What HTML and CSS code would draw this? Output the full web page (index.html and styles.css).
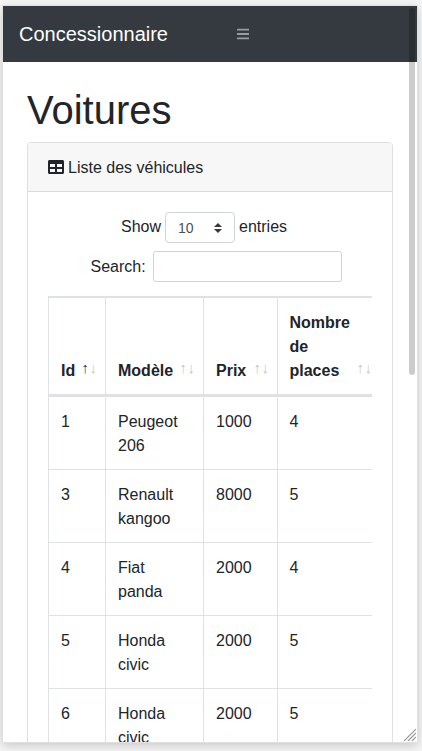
FILE: index.html
```html
<!DOCTYPE html>
<html lang="fr">
<head>
<meta charset="utf-8">
<title>Concessionnaire</title>
<link rel="stylesheet" href="styles.css">
</head>
<body>
<div class="viewport">
  <nav class="navbar">
    <span class="brand">Concessionnaire</span>
    <svg class="bars" viewBox="0 0 448 512" width="12.25" height="14" fill="currentColor"><path d="M16 132h416c8.837 0 16-7.163 16-16V76c0-8.837-7.163-16-16-16H16C7.163 60 0 67.163 0 76v40c0 8.837 7.163 16 16 16zm0 160h416c8.837 0 16-7.163 16-16v-40c0-8.837-7.163-16-16-16H16c-8.837 0-16 7.163-16 16v40c0 8.837 7.163 16 16 16zm0 160h416c8.837 0 16-7.163 16-16v-40c0-8.837-7.163-16-16-16H16c-8.837 0-16 7.163-16 16v40c0 8.837 7.163 16 16 16z"/></svg>
  </nav>
  <main class="content">
    <h1>Voitures</h1>
    <section class="card">
      <header class="card-header">
        <svg viewBox="0 0 512 512" width="16" height="16" fill="currentColor"><path d="M464 32H48C21.490 32 0 53.490 0 80v352c0 26.510 21.490 48 48 48h416c26.510 0 48-21.490 48-48V80c0-26.510-21.490-48-48-48zM224 416H64v-96h160v96zm0-160H64v-96h160v96zm224 160H288v-96h160v96zm0-160H288v-96h160v96z"/></svg>
        <span>Liste des véhicules</span>
      </header>
      <div class="card-body">
        <div class="length"><span>Show</span>
          <div class="select"><span>10</span><svg viewBox="0 0 4 5" width="8" height="10"><path fill="#343a40" d="M2 0L0 2h4zm0 5L0 3h4z"/></svg></div>
          <span>entries</span></div>
        <label class="search"><span>Search:</span><input type="text"></label>
        <div class="table-wrap">
          <table>
            <colgroup><col class="c-id"><col class="c-model"><col class="c-price"><col class="c-seats"></colgroup>
            <thead><tr>
              <th class="asc">Id</th><th>Modèle</th><th>Prix</th><th>Nombre de places</th>
            </tr></thead>
            <tbody>
              <tr><td>1</td><td>Peugeot 206</td><td>1000</td><td>4</td></tr>
              <tr><td>3</td><td>Renault kangoo</td><td>8000</td><td>5</td></tr>
              <tr><td>4</td><td>Fiat panda</td><td>2000</td><td>4</td></tr>
              <tr><td>5</td><td>Honda civic</td><td>2000</td><td>5</td></tr>
              <tr><td>6</td><td>Honda civic</td><td>2000</td><td>5</td></tr>
            </tbody>
          </table>
        </div>
      </div>
    </section>
  </main>
  <div class="scrollbar"></div>
  <svg class="grip" viewBox="0 0 12 12" width="12" height="12" stroke="#999" stroke-width="1.2" fill="none"><path d="M0 12L12 0M4 12L12 4M8 12L12 8"/></svg>
</div>
</body>
</html>
```
FILE: styles.css
```css
* { box-sizing: border-box; }
html { background: #f4f4f4; }
body {
  margin: 0;
  height: 751px;
  padding: 6px 5px 9px 3px;
  overflow: hidden;
  font: 16px/24px "Liberation Sans", Arial, sans-serif;
  color: #212529;
}
.viewport {
  position: relative;
  height: 736px;
  background: #fff;
  box-shadow: 0 0 0 1px #dfe1e1, 0 3px 10px rgba(0, 0, 0, .2);
  display: flow-root;
}
.navbar {
  display: flex;
  align-items: center;
  height: 56px;
  padding-left: 16px;
  background: #343a40;
}
.brand {
  width: 218px;
  font-size: 20px;
  line-height: 30px;
  color: #fff;
}
.bars { color: rgba(255, 255, 255, .5); }
.content {
  height: 680px;
  padding: 24px 24px 0;
  overflow: hidden;
}
h1 {
  margin: 0 0 8px;
  font-size: 40px;
  font-weight: 400;
  line-height: 48px;
}
.card {
  border: 1px solid #dfdfdf;
  border-radius: 4px;
}
.card-header {
  display: flex;
  align-items: center;
  gap: 4px;
  padding: 13px 20px 11px;
  background: #f7f7f7;
  border-bottom: 1px solid #dadada;
  border-radius: 3px 3px 0 0;
}
.card-header svg { margin-bottom: 2px; }
.card-body { padding: 20px 20px 40px; }
.length {
  display: flex;
  gap: 4px;
  height: 31px;
  padding-left: 73px;
  line-height: 29px;
}
.select {
  display: flex;
  align-items: center;
  justify-content: space-between;
  width: 70px;
  height: 31px;
  padding: 1px 12px 0;
  border: 1px solid #ced4da;
  border-radius: 4px;
  font-size: 14px;
  color: #495057;
}
.select span { padding-top: 1px; }
.search {
  display: flex;
  gap: 7.5px;
  margin-top: 8px;
  padding-left: 42.5px;
  line-height: 31px;
}
.search input {
  width: 189px;
  height: 31px;
  padding: 4px 8px;
  border: 1px solid #ced4da;
  border-radius: 3px;
}
.table-wrap {
  margin-top: 14px;
  overflow: hidden;
}
table {
  width: 332px;
  table-layout: fixed;
  border-spacing: 0;
}
.c-id { width: 57px; }
.c-model { width: 98px; }
.c-price { width: 74px; }
.c-seats { width: 103px; }
th, td {
  padding: 13px 0 11px 12px;
  border-left: 1px solid #dee2e6;
  border-bottom: 1px solid #dee2e6;
  text-align: left;
  vertical-align: top;
}
td { padding-right: 12px; }
th:last-child, td:last-child { padding-left: 11.5px; }
th {
  position: relative;
  padding-right: 24px;
  border-top: 2px solid #dee2e6;
  border-bottom-width: 3px;
  vertical-align: bottom;
}
th::before, th::after {
  position: absolute;
  bottom: 14px;
  font-size: 15px;
  font-weight: 400;
  opacity: .27;
}
th::before { content: "↑"; right: 16px; }
th::after { content: "↓"; right: 8px; }
th.asc::before { opacity: .9; }
.scrollbar {
  position: absolute;
  top: 2px;
  right: 2px;
  width: 6px;
  height: 367px;
  border-radius: 3px;
  background: rgba(0, 0, 0, .2);
}
.grip {
  position: absolute;
  right: 1px;
  bottom: 1px;
}
```
